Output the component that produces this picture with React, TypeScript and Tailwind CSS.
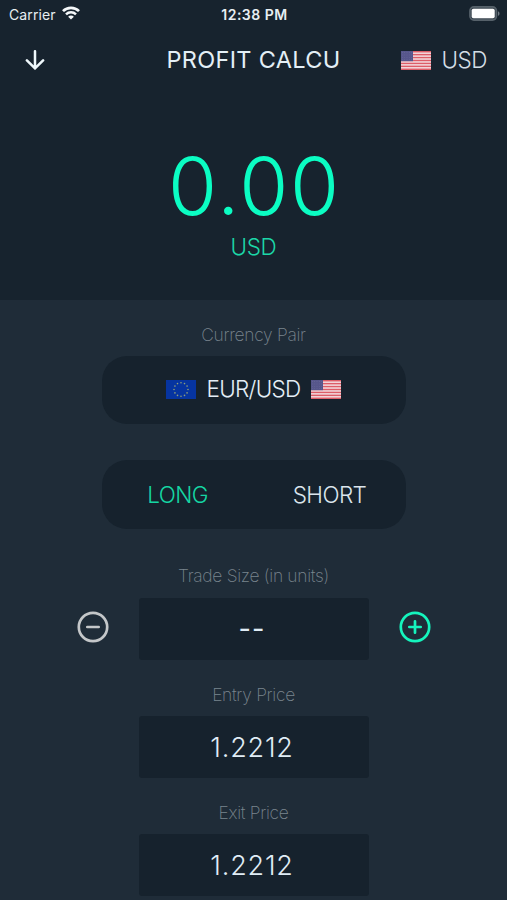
import { useState } from 'react';

interface FieldProps {
  label: string;
  value: string;
}

function UsFlag() {
  return (
    <svg width="30" height="19" viewBox="0 0 30 19" className="block shrink-0">
      <rect width="30" height="19" fill="#f4dfe3" />
      {[0, 1, 2, 3, 4, 5, 6].map((i) => (
        <rect key={i} y={i * 2.923} width="30" height="1.462" fill="#dd5d68" />
      ))}
      <rect width="12" height="10.2" fill="#56568b" />
      {[0, 1, 2, 3].map((row) =>
        [0, 1, 2, 3, 4].map((col) => (
          <circle key={`${row}-${col}`} cx={1.4 + col * 2.3} cy={1.5 + row * 2.4} r="0.4" fill="#7474a0" />
        ))
      )}
    </svg>
  );
}

function EuFlag() {
  return (
    <svg width="30" height="19" viewBox="0 0 30 19" className="block shrink-0">
      <rect width="30" height="19" fill="#0634a0" />
      {Array.from({ length: 12 }, (_, i) => {
        const angle = (i * Math.PI) / 6;
        return (
          <circle
            key={i}
            cx={15 + 7 * Math.sin(angle)}
            cy={9.5 - 6.8 * Math.cos(angle)}
            r="0.8"
            fill="#8f9f78"
          />
        );
      })}
    </svg>
  );
}

function StatusBar() {
  return (
    <div className="grid h-[28px] grid-cols-3 items-center pl-[9px] pr-[7px] text-[14px] text-[#e8eef2]">
      <div className="flex items-center gap-[6px]">
        <span className="tracking-[0.1px]">Carrier</span>
        <svg width="18" height="14" viewBox="0 0 18 14" fill="none" stroke="#f5f8fa" className="mb-[2px]">
          <path d="M1 5.1C5.4.7 12.6.7 17 5.1" strokeWidth="2.7" />
          <path d="M4 8.3c2.8-2.7 7.2-2.7 10 0" strokeWidth="2.5" />
          <path d="M9 13.6L6.1 10.8c1.6-1.6 4.2-1.6 5.8 0z" fill="#f5f8fa" stroke="none" />
        </svg>
      </div>
      <span className="text-center text-[14px] font-semibold tracking-[0.5px] whitespace-nowrap">12:38 PM</span>
      <div className="flex justify-end pb-[2px]">
        <svg width="31" height="15" viewBox="0 0 31 15">
          <rect x="0.9" y="0.9" width="26.6" height="13.2" rx="4" fill="#3b4650" stroke="#56616a" strokeWidth="1.6" />
          <rect x="2.7" y="2.7" width="23" height="9.6" rx="1.8" fill="#fff" />
          <path d="M29 5.2c2 .8 2 3.8 0 4.6z" fill="#707a82" />
        </svg>
      </div>
    </div>
  );
}

function Label({ children }: { children: string }) {
  return (
    <div className="text-center text-[17.4px] leading-[24px] font-extralight tracking-[-0.3px] text-[#7a858e]">
      {children}
    </div>
  );
}

function PriceField({ label, value }: FieldProps) {
  return (
    <div className="flex flex-col items-center">
      <Label>{label}</Label>
      <div className="mt-[9px] flex h-[62px] w-[230px] items-center justify-center rounded-[3px] bg-[#16222d] pt-[2px] pr-[3px] text-[27px] font-[350] tracking-[0.8px] text-[#e0edf6]">
        {value}
      </div>
    </div>
  );
}

export default function App() {
  const [side, setSide] = useState<'long' | 'short'>('long');

  return (
    <div className="flex h-[900px] w-[507px] flex-col overflow-hidden bg-[#1f2c38] font-['Inter',sans-serif]">
      {/* Header and result */}
      <header className="h-[300px] shrink-0 bg-[#17232e]">
        <StatusBar />
        <div className="grid h-[64px] grid-cols-[1fr_174px_1fr] items-center">
          <button className="ml-[25px] w-[20px]">
            <svg width="20" height="20" viewBox="0 0 20 20" fill="none" stroke="#eff8fc" strokeWidth="2.5" strokeLinecap="round" strokeLinejoin="round">
              <path d="M10 1.2v17.2M1.9 10.4l8.1 8 8.1-8" />
            </svg>
          </button>
          <h1 className="text-center text-[23.5px] font-[380] tracking-[0.3px] whitespace-nowrap text-[#e4eff6]">PROFIT CALCU</h1>
          <div className="flex items-center justify-end gap-[11px] pr-[20px]">
            <UsFlag />
            <span className="text-[22.5px] font-light tracking-[-0.5px] text-[#d4dee6]">USD</span>
          </div>
        </div>
        <div className="mt-[54px] pl-[2px] text-center text-[79.5px] leading-[80px] font-[330] tracking-[1.8px] text-[#0bfdc3]">0.00</div>
        <div className="mt-[6px] text-center text-[22.5px] leading-[30px] font-light tracking-[-0.4px] text-[#1cd7a8]">USD</div>
      </header>

      {/* Trade settings */}
      <main className="flex flex-col items-center pt-[23px]">
        <Label>Currency Pair</Label>
        <button className="mt-[9px] flex h-[68px] w-[304px] items-center justify-center gap-[10px] rounded-[25px] bg-[#16222d] pb-[2px] text-[22.5px] text-[#e4eef6]">
          <EuFlag />
          <span className="font-[350] tracking-[-0.7px]">EUR/USD</span>
          <UsFlag />
        </button>

        <div className="mt-[36px] grid h-[69px] w-[304px] grid-cols-2 rounded-[25px] bg-[#16222d] text-[22.5px] font-[350] tracking-[-0.6px]">
          <button onClick={() => setSide('long')} className={side === 'long' ? 'text-[#15d6a3]' : 'text-[#dbe5ec]'}>
            LONG
          </button>
          <button onClick={() => setSide('short')} className={side === 'short' ? 'text-[#15d6a3]' : 'text-[#dbe5ec]'}>
            SHORT
          </button>
        </div>

        <div className="mt-[35px]">
          <Label>Trade Size (in units)</Label>
        </div>
        <div className="mt-[10px] flex items-center gap-[30px]">
          <button className="pb-[4px]">
            <svg width="32" height="32" viewBox="0 0 32 32" fill="none" stroke="#c4c7c9" strokeWidth="2.7" strokeLinecap="round">
              <circle cx="16" cy="16" r="14.2" />
              <path d="M10.3 16h11.4" />
            </svg>
          </button>
          <div className="flex h-[62px] w-[230px] items-center justify-center rounded-[3px] bg-[#16222d] pr-[3px] text-[27px] tracking-[1px] text-[#e0edf6]">
            --
          </div>
          <button className="pb-[4px]">
            <svg width="32" height="32" viewBox="0 0 32 32" fill="none" stroke="#15f4bd" strokeWidth="2.7" strokeLinecap="round">
              <circle cx="16" cy="16" r="14.2" />
              <path d="M10.3 16h11.4M16 10.3v11.4" />
            </svg>
          </button>
        </div>

        <div className="mt-[23px] flex flex-col gap-[23px]">
          <PriceField label="Entry Price" value="1.2212" />
          <PriceField label="Exit Price" value="1.2212" />
        </div>
      </main>
    </div>
  );
}
